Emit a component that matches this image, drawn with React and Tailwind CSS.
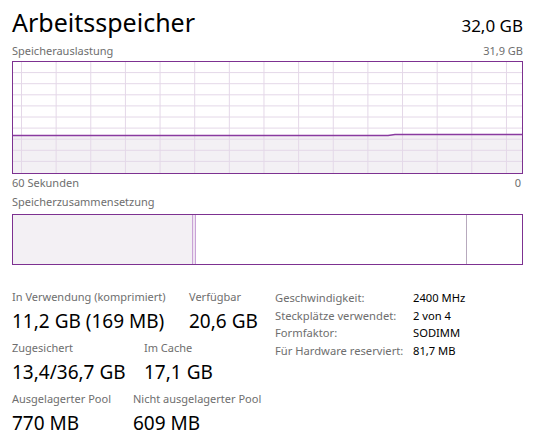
import React from "react";

const font = { fontFamily: '"Noto Sans", "Open Sans", sans-serif' };

function UsageGraph() {
  const w = 509;
  const h = 111;
  const cols = [];
  for (let i = 0; i < 15; i++) cols.push(8 + i * 34.64);
  const rows = [];
  for (let i = 1; i < 10; i++) rows.push(i * 11.1 - 1);
  const line = `M0 73.5 L375 73.5 L382 72.5 L${w} 72.5`;
  return (
    <div className="h-[113px] border border-[#7d3191] bg-white">
      <svg width={w} height={h} className="block">
        <path d={`${line} L${w} ${h} L0 ${h} Z`} fill="#f3f0f4" />
        {cols.map((x) => (
          <line key={"c" + x} x1={x + 0.5} x2={x + 0.5} y1={0} y2={h} stroke="#e4d8e8" strokeWidth="1" />
        ))}
        {rows.map((y) => (
          <line key={"r" + y} x1={0} x2={w} y1={y + 0.5} y2={y + 0.5} stroke="#e4d8e8" strokeWidth="1" />
        ))}
        <path d={line} fill="none" stroke="#8a3aa0" strokeWidth="1.3" />
      </svg>
    </div>
  );
}

function Composition() {
  return (
    <div className="flex h-[51px] border border-[#7d3191] bg-white">
      <div className="w-[179px] bg-[#f3f0f4]" />
      <div className="w-[4px] border-x border-[#c9a2d6] bg-[#efe4f2]" />
      <div className="w-[270px]" />
      <div className="w-px bg-[#b7a9bd]" />
      <div className="flex-1" />
    </div>
  );
}

function Stat({ label, value, width }) {
  return (
    <div className={width}>
      <div className="text-[11px] leading-[16px] text-[#6e6e6e] whitespace-nowrap">{label}</div>
      <div className="mt-[4px] text-[19px] leading-[24px] text-black whitespace-nowrap">{value}</div>
    </div>
  );
}

const details = [
  ["Geschwindigkeit:", "2400 MHz"],
  ["Steckplätze verwendet:", "2 von 4"],
  ["Formfaktor:", "SODIMM"],
  ["Für Hardware reserviert:", "81,7 MB"],
];

export default function App() {
  return (
    <div className="w-[535px] h-[446px] bg-white px-[12px] pt-[4px] overflow-hidden" style={font}>
      <div className="flex justify-between items-baseline h-[36px]">
        <div className="text-[25px] leading-[36px] text-black">Arbeitsspeicher</div>
        <div className="text-[17px] leading-[36px] text-black">32,0 GB</div>
      </div>

      <div className="mt-[3px] mb-[2px] flex justify-between text-[11px] leading-[16px] text-[#6e6e6e]">
        <span>Speicherauslastung</span>
        <span>31,9 GB</span>
      </div>
      <UsageGraph />

      <div className="mt-[1px] flex justify-between text-[11px] leading-[16px] text-[#6e6e6e]">
        <span>60 Sekunden</span>
        <span className="pr-[2px]">0</span>
      </div>

      <div className="mt-[3px] mb-[4px] text-[11px] leading-[16px] text-[#6e6e6e]">
        Speicherzusammensetzung
      </div>
      <Composition />

      <div className="mt-[24px] flex items-start">
        <div className="w-[263px] flex flex-col gap-[7px]">
          <div className="flex">
            <Stat width="w-[177px]" label="In Verwendung (komprimiert)" value="11,2 GB (169 MB)" />
            <Stat label="Verfügbar" value="20,6 GB" />
          </div>
          <div className="flex">
            <Stat width="w-[132px]" label="Zugesichert" value="13,4/36,7 GB" />
            <Stat label="Im Cache" value="17,1 GB" />
          </div>
          <div className="flex">
            <Stat width="w-[121px]" label="Ausgelagerter Pool" value="770 MB" />
            <Stat label="Nicht ausgelagerter Pool" value="609 MB" />
          </div>
        </div>

        <div className="grid grid-cols-[138px_auto] content-start text-[11.2px] leading-[17.6px]">
          {details.map(([k, v]) => (
            <React.Fragment key={k}>
              <div className="text-[#6e6e6e] whitespace-nowrap">{k}</div>
              <div className="text-black whitespace-nowrap">{v}</div>
            </React.Fragment>
          ))}
        </div>
      </div>
    </div>
  );
}
